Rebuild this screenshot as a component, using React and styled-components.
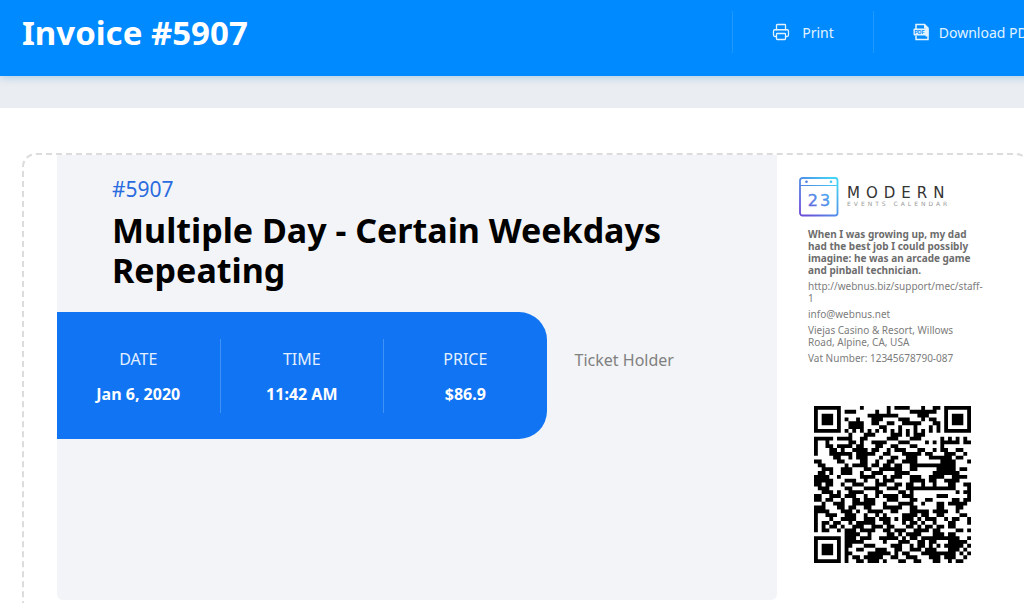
import React from 'react'
import styled, { createGlobalStyle } from 'styled-components'
import { Printer } from 'lucide-react'

const GlobalStyle = createGlobalStyle`
  * {
    box-sizing: border-box;
  }
  body {
    margin: 0;
    overflow-x: hidden;
    background-color: #fff;
    font-family: 'Noto Sans', 'Open Sans', sans-serif;
  }
  h1, h2, p, dl, dd {
    margin: 0;
  }
`

const Page = styled.div`
  min-width: 1074px;
`
const Header = styled.header`
  position: relative;
  display: flex;
  justify-content: space-between;
  height: 76px;
  padding: 11px 0 0 22px;
  background-color: #008aff;
  box-shadow: 0 2px 8px rgba(0, 110, 200, 0.25);
`
const InvoiceTitle = styled.h1`
  color: #fff;
  font-size: 33px;
  line-height: 44px;
`
const Actions = styled.div`
  display: flex;
  height: 42px;
`
const ActionButton = styled.button`
  display: flex;
  align-items: center;
  gap: ${(props) => props.$gap};
  padding: 0 39px;
  border: 0;
  border-left: solid 1px #1f98ff;
  background: none;
  color: #e2f3ff;
  font-family: inherit;
  font-size: 14px;
  white-space: nowrap;
  cursor: pointer;
`
const Strip = styled.div`
  height: 32px;
  background-color: #eaeef2;
`
const Sheet = styled.main`
  padding: 45px 44px 40px 22px;
`
const Ticket = styled.section`
  display: flex;
  padding: 0 0 40px 33px;
  border: dashed 2px #dcdcdc;
  border-radius: 14px;
`
const Details = styled.div`
  flex: 1;
  min-height: 445px;
  padding-top: 20px;
  border-radius: 0 0 6px 6px;
  background-color: #f3f4f7;
`
const TicketNumber = styled.p`
  padding-left: 55px;
  color: #2a6cdf;
  font-size: 21px;
  line-height: 28px;
`
const EventTitle = styled.h2`
  padding: 7px 55px 0;
  color: #000;
  font-size: 34px;
  line-height: 40px;
`
const Summary = styled.div`
  display: flex;
  align-items: flex-start;
  gap: 28px;
  margin-top: 22px;
`
const Facts = styled.dl`
  display: flex;
  width: 68%;
  padding: 27px 0 26px;
  border-radius: 0 28px 28px 0;
  background-color: #1175f3;
  color: #fff;
`
const Fact = styled.div`
  flex: 1;
  height: 74px;
  padding-top: 8px;
  text-align: center;
  font-size: 16px;
  line-height: 24px;

  & + & {
    border-left: solid 1px #3f92f8;
  }
  dt {
    color: #e4f0ff;
  }
  dd {
    margin-top: 11px;
    font-weight: 700;
  }
`
const Holder = styled.p`
  padding-top: 36px;
  color: #808080;
  font-size: 16px;
  line-height: 24px;
`
const Side = styled.aside`
  width: 251px;
  padding: 22px 38px 0 22px;
`
const Brand = styled.div`
  display: flex;
  align-items: center;
  gap: 8px;
`
const BrandName = styled.div`
  color: #333;
  font-family: 'DejaVu Sans', sans-serif;
  font-size: 15px;
  line-height: 13px;
  letter-spacing: 6px;
  white-space: nowrap;

  small {
    display: block;
    color: #999;
    font-size: 6px;
    line-height: 8px;
    letter-spacing: 3px;
  }
`
const Organizer = styled.div`
  width: 184px;
  padding: 11px 0 0 9px;
  color: #7c7c7c;
  font-size: 10px;
  line-height: 12px;

  p + p {
    margin-top: 4px;
  }
`
const OrganizerNote = styled.p`
  color: #6d6d6d;
  font-weight: 700;
`
const OrganizerAddress = styled.p`
  padding-right: 10px;
`
const QrBox = styled.div`
  padding: 42px 0 0 15px;

  svg {
    display: block;
  }
`

const qrRows = [
  '11111110000010000001011110001001101111111',
  '10000010111000001001000001111111001000001',
  '10111010000000111111110000011100001011101',
  '10111010100100011100001110001011001011101',
  '10111010011110011001100111110001101011101',
  '10000010011110000110001000100010101000001',
  '11111110101010101010101010101010101111111',
  '00000000010001110000111010111000000000000',
  '11111011110011000001110001110000010101010',
  '10010000011010011110001110000101011111011',
  '10011011110110001100110001100000010000000',
  '10001101001111011001011100011001011001100',
  '10001111110111110011000111110110001110010',
  '00000110010111000100110011100011111101100',
  '11000011000011001001100111100000011110001',
  '01100000101111011011011001111111111110000',
  '00111001110001100111111001100000111110110',
  '01101001110010011100011110000001111111000',
  '11110010000011110010111001110011110011110',
  '11111000111001001011100001111011001111000',
  '11011001001110001110011011001001000110011',
  '01110000110001111001110011111111111110001',
  '00111010011110001100001101000000000001011',
  '11001110111001001011110111000000111000001',
  '11011001001101110001110001100110000011011',
  '00100111001111110010001111001000110111110',
  '11100011011001100011111001100000110001100',
  '11110001110100111100110001111101111001000',
  '10011100111001001010000111101100110000110',
  '10001001111001110111010111010111001011001',
  '10110110010111110011000101101001000110001',
  '10101101001110011101100011010110110110000',
  '10110010111011110011011100111101100001101',
  '00000000111100100001101011110001110110000',
  '11111110111011100111110101101111111111001',
  '10000010111110000010001110011011000111110',
  '10111010110001110000111001011010101111101',
  '10111010100110001110011001110111000111010',
  '10111010110000111111010110001111111110101',
  '10000010101101111100110011100011101110010',
  '11111110100110111010001100110001100101100',
]

const organizerLink = 'http://webnus.biz/support/mec/staff-1'

const facts = [
  { label: 'DATE', value: 'Jan 6, 2020' },
  { label: 'TIME', value: '11:42 AM' },
  { label: 'PRICE', value: '$86.9' },
]

const PdfIcon = () => (
  <svg width="17" height="18" viewBox="0 0 17 18" aria-hidden="true">
    <path d="M3 6V1.500h8.500L15 5v11.500H3V12.500" fill="none" stroke="#e2f3ff" strokeWidth="1.500" />
    <path d="M11 1l4.500 4.500H11zM12.500 5.500h3v8h-3z" fill="#e2f3ff" />
    <rect x="0.500" y="5.500" width="13" height="7" rx="1" fill="#e2f3ff" />
    <text x="1.500" y="11" fontSize="5" fontWeight="700" fontFamily="Liberation Sans, sans-serif" fill="#008aff">PDF</text>
  </svg>
)

const CalendarLogo = () => (
  <svg width="40" height="40" viewBox="0 0 40 40" role="img" aria-label="Calendar 23">
    <defs>
      <linearGradient id="brand" gradientUnits="userSpaceOnUse" x1="4" y1="36" x2="36" y2="4">
        <stop offset="0" stopColor="#6b4fd8" />
        <stop offset="0.500" stopColor="#508fe8" />
        <stop offset="1" stopColor="#45d3f5" />
      </linearGradient>
    </defs>
    <g fill="none" stroke="url(#brand)">
      <rect x="1" y="1" width="37.500" height="37.500" rx="2.500" strokeWidth="1.800" />
      <path d="M1 8.500h37.500" strokeWidth="1.200" />
    </g>
    <circle cx="7.500" cy="4.800" r="1.300" fill="#5279e0" />
    <circle cx="32" cy="4.800" r="1.300" fill="#45c9f2" />
    <text x="21" y="28.500" textAnchor="middle" fontSize="16" letterSpacing="2" fontFamily="DejaVu Sans, sans-serif" fill="url(#brand)" stroke="url(#brand)" strokeWidth="0.400">23</text>
  </svg>
)

const QrCode = () => (
  <svg width="157" height="157" viewBox="0 0 41 41" role="img" aria-label="Ticket QR code">
    <path
      fill="#000"
      d={qrRows
        .map((row, y) => [...row].map((cell, x) => (cell === '1' ? `M${x} ${y}h1v1h-1z` : '')).join(''))
        .join('')}
    />
  </svg>
)

export default function App() {
  return (
    <Page>
      <GlobalStyle />
      <Header>
        <InvoiceTitle>Invoice #5907</InvoiceTitle>
        <Actions>
          <ActionButton type="button" $gap="12px">
            <Printer size={18} strokeWidth={1.7} />
            Print
          </ActionButton>
          <ActionButton type="button" $gap="9px">
            <PdfIcon />
            Download PDF
          </ActionButton>
        </Actions>
      </Header>
      <Strip />
      <Sheet>
        <Ticket>
          <Details>
            <TicketNumber>#5907</TicketNumber>
            <EventTitle>Multiple Day - Certain Weekdays Repeating</EventTitle>
            <Summary>
              <Facts>
                {facts.map(({ label, value }) => (
                  <Fact key={label}>
                    <dt>{label}</dt>
                    <dd>{value}</dd>
                  </Fact>
                ))}
              </Facts>
              <Holder>Ticket Holder</Holder>
            </Summary>
          </Details>
          <Side>
            <Brand>
              <CalendarLogo />
              <BrandName>
                MODERN
                <small>EVENTS CALENDAR</small>
              </BrandName>
            </Brand>
            <Organizer>
              <OrganizerNote>
                When I was growing up, my dad had the best job I could possibly imagine: he was an arcade game and
                pinball technician.
              </OrganizerNote>
              <p>{organizerLink}</p>
              <p>info@webnus.net</p>
              <OrganizerAddress>Viejas Casino &amp; Resort, Willows Road, Alpine, CA, USA</OrganizerAddress>
              <p>Vat Number: 12345678790-087</p>
            </Organizer>
            <QrBox>
              <QrCode />
            </QrBox>
          </Side>
        </Ticket>
      </Sheet>
    </Page>
  )
}
